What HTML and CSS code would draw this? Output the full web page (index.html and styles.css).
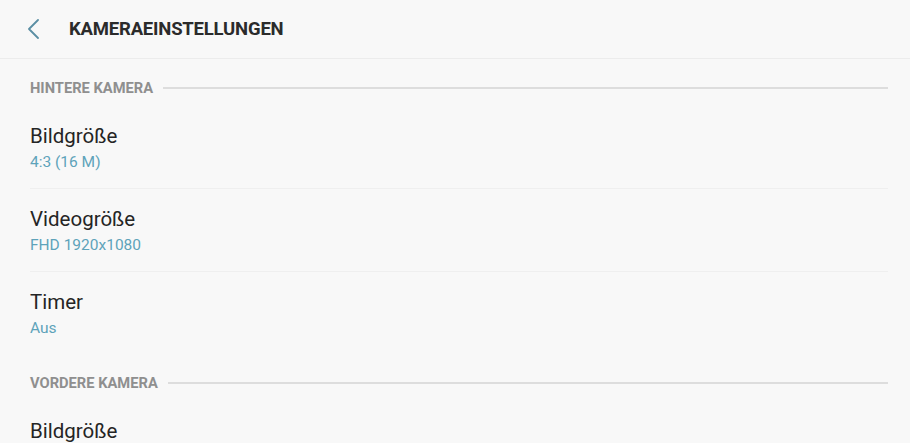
FILE: index.html
```html
<!DOCTYPE html>
<html lang="de">
<head>
    <meta charset="UTF-8">
    <meta name="viewport" content="width=device-width, initial-scale=1.0">
    <title>Kameraeinstellungen</title>
    <link rel="stylesheet" href="styles.css">
</head>
<body>
    <header class="app-bar">
        <button class="back" aria-label="Zurück">
            <svg width="14" height="20" viewBox="0 0 14 20">
                <path d="M11 1 L2 10 L11 19" fill="none" stroke="#5b8fa4" stroke-width="1.8" stroke-linecap="round" stroke-linejoin="round"/>
            </svg>
        </button>
        <h1>KAMERAEINSTELLUNGEN</h1>
    </header>

    <main class="settings">
        <div class="section-title"><span>HINTERE KAMERA</span></div>

        <div class="item">
            <div class="item-title">Bildgröße</div>
            <div class="item-value">4:3 (16 M)</div>
        </div>
        <div class="item">
            <div class="item-title">Videogröße</div>
            <div class="item-value">FHD 1920x1080</div>
        </div>
        <div class="item last">
            <div class="item-title">Timer</div>
            <div class="item-value">Aus</div>
        </div>

        <div class="section-title"><span>VORDERE KAMERA</span></div>

        <div class="item">
            <div class="item-title">Bildgröße</div>
            <div class="item-value">4:3 (5 M)</div>
        </div>
    </main>
</body>
</html>
```

FILE: styles.css
```css
body {
    margin: 0;
    padding: 0;
    background-color: #f8f8f8;
    font-family: Roboto, "Noto Sans", sans-serif;
    color: #252525;
    overflow: hidden;
}

.app-bar {
    height: 58px;
    display: flex;
    align-items: center;
    border-bottom: 1px solid #ececec;
}

.back {
    background: none;
    border: none;
    padding: 0;
    margin: 0 0 0 27px;
    width: 14px;
    height: 20px;
    display: flex;
    cursor: pointer;
}

.app-bar h1 {
    margin: 0 0 0 28px;
    font-size: 18.5px;
    font-weight: bold;
    color: #2b2b2b;
    letter-spacing: -0.2px;
}

.settings {
    padding: 0 22px 0 30px;
}

.section-title {
    display: flex;
    align-items: center;
    padding: 21px 0 10px;
    line-height: 16px;
    font-size: 14.7px;
    font-weight: bold;
    color: #8f8f8f;
}

.section-title::after {
    content: "";
    flex: 1;
    height: 2px;
    margin-left: 10px;
    background-color: #dddddd;
}

.item {
    padding: 18px 0 15px;
    border-bottom: 1px solid #efefef;
}

.item.last {
    border-bottom: none;
}

.item-title {
    font-size: 20.5px;
    line-height: 25px;
}

.item-value {
    margin-top: 3px;
    font-size: 15.5px;
    line-height: 21px;
    color: #5ea3ba;
}
```
